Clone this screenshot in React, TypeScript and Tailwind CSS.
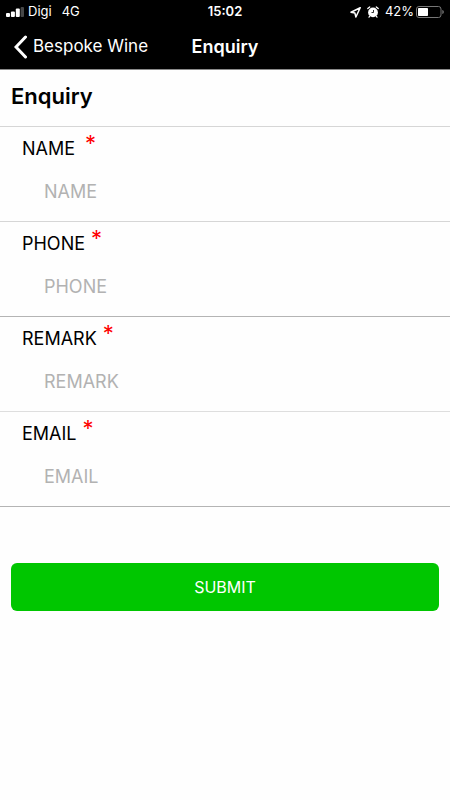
import { useState, FormEvent } from 'react'

interface Field {
  id: string
  label: string
  type: string
  gap: string
  line: string
}

const fields: Field[] = [
  { id: 'name', label: 'NAME', type: 'text', gap: 'gap-2.5', line: 'border-[#d6d6d6]' },
  { id: 'phone', label: 'PHONE', type: 'tel', gap: 'gap-1.5', line: 'border-[#b4b4b4]' },
  { id: 'remark', label: 'REMARK', type: 'text', gap: 'gap-1.5', line: 'border-[#dedede]' },
  { id: 'email', label: 'EMAIL', type: 'email', gap: 'gap-1.5', line: 'border-[#b4b4b4]' },
]

function SignalIcon() {
  return (
    <svg width="18" height="10" viewBox="0 0 18 10" fill="#fff" aria-hidden="true">
      <rect x="0" y="6" width="4" height="4" rx="1" />
      <rect x="4.9" y="4.5" width="4" height="5.5" rx="1" />
      <rect x="9.8" y="1.5" width="4" height="8.5" rx="1" />
      <rect x="14.6" y="0" width="3.4" height="10" rx="1" opacity="0.28" />
    </svg>
  )
}

function LocationIcon() {
  return (
    <svg width="11" height="11" viewBox="0 0 11 11" fill="none" stroke="#fff" strokeWidth="1.5" strokeLinejoin="round" aria-hidden="true">
      <path d="M10.2 0.8 1 5.2 4.9 6.1 5.9 10Z" />
    </svg>
  )
}

function AlarmIcon() {
  return (
    <svg width="12" height="12" viewBox="0 0 12 12" aria-hidden="true">
      <circle cx="6" cy="6.4" r="4.9" fill="#fff" />
      <path d="M0.8 2.6 2.7 0.9M11.2 2.6 9.3 0.9" stroke="#fff" strokeWidth="1.3" strokeLinecap="round" />
      <path d="M2.6 10.3 2 11.2M9.4 10.3l0.6 0.9" stroke="#fff" strokeWidth="1.2" strokeLinecap="round" />
      <path d="M6.5 4V6.5H4.5" fill="none" stroke="#000" strokeWidth="0.8" />
    </svg>
  )
}

function BatteryIcon() {
  return (
    <svg width="28" height="12" viewBox="0 0 28 12" aria-hidden="true">
      <rect x="0.5" y="0.5" width="24.5" height="11" rx="2.5" fill="none" stroke="#777" />
      <rect x="2" y="2" width="10" height="8" rx="0.8" fill="#fff" />
      <path d="M26.3 4v4c1-.4 1.5-1.1 1.5-2s-.5-1.6-1.5-2Z" fill="#777" />
    </svg>
  )
}

export default function App() {
  const [form, setForm] = useState<Record<string, string>>({})

  function handleSubmit(e: FormEvent) {
    e.preventDefault()
  }

  return (
    <div className="min-h-screen bg-[#fefefe] font-['Inter',sans-serif] text-black">
      <header className="bg-black text-white border-b border-[#8a8a8a]">
        {/* Status bar */}
        <div className="grid grid-cols-[1fr_auto_1fr] items-center h-6 px-1.5 text-[13px]">
          <div className="flex items-center">
            <SignalIcon />
            <span className="ml-1">Digi</span>
            <span className="ml-2.5">4G</span>
          </div>
          <span className="font-semibold">15:02</span>
          <div className="flex items-center justify-end">
            <LocationIcon />
            <span className="ml-1.5"><AlarmIcon /></span>
            <span className="ml-1.5 mr-0.5">42%</span>
            <BatteryIcon />
          </div>
        </div>

        {/* Navigation bar */}
        <nav className="grid grid-cols-[1fr_auto_1fr] items-center h-[45px] px-3.5">
          <a href="#bespoke-wine" className="flex items-center gap-1.5 text-[17px]">
            <svg width="13" height="24" viewBox="0 0 13 24" fill="none" stroke="#fff" strokeWidth="3" strokeLinecap="round" aria-hidden="true">
              <path d="M11.5 2 2 12l9.5 10" />
            </svg>
            Bespoke Wine
          </a>
          <span className="text-lg font-semibold">Enquiry</span>
        </nav>
      </header>

      <main>
        <h1 className="h-[57px] px-[11px] pt-2.5 border-b border-[#d6d6d6] text-[22px] leading-8 font-semibold">Enquiry</h1>

        <form onSubmit={handleSubmit} noValidate>
          {fields.map((f) => (
            <div key={f.id} className={`pb-2.5 border-b ${f.line}`}>
              <label htmlFor={f.id} className={`flex items-center h-11 px-[22px] text-lg ${f.gap}`}>
                {f.label}
                <span className="self-start text-[22px] leading-8 text-[#f00]">*</span>
              </label>
              <input
                id={f.id}
                type={f.type}
                value={form[f.id] ?? ''}
                onChange={(e) => setForm((prev) => ({ ...prev, [f.id]: e.target.value }))}
                placeholder={f.label}
                className="block w-full h-10 px-11 text-lg bg-transparent outline-none placeholder:text-[#b2b2b2]"
              />
            </div>
          ))}

          <div className="px-[11px] pt-14">
            <button type="submit" className="w-full h-12 rounded-md bg-[#00c600] text-white text-base">
              SUBMIT
            </button>
          </div>
        </form>
      </main>
    </div>
  )
}
